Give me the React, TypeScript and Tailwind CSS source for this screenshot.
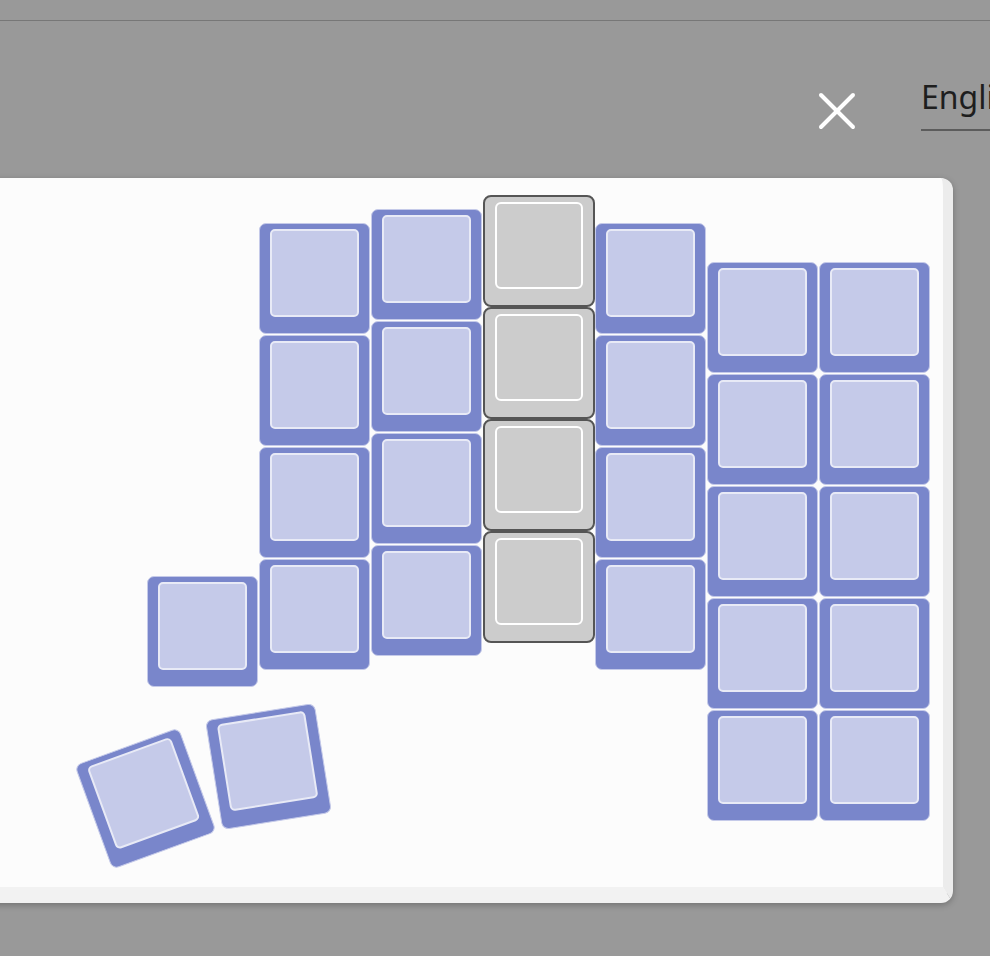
import React from 'react';

type Key = { x: number; y: number; r?: number; gray?: boolean };

// key positions in page pixels (top-left of the 111px keycap)
const PANEL_LEFT = -20;
const PANEL_TOP = 178;
const PITCH = 112;

function column(x: number, y: number, rows: number, gray = false): Key[] {
  return Array.from({ length: rows }, (_, i) => ({ x, y: y + i * PITCH, gray }));
}

const keys: Key[] = [
  ...column(259, 223, 4),
  ...column(371, 209, 4),
  ...column(483, 195, 4, true),
  ...column(595, 223, 4),
  ...column(707, 262, 5),
  ...column(819, 262, 5),
  { x: 147, y: 576 },
  { x: 90, y: 743, r: -20 },
  { x: 213, y: 711, r: -9 },
];

function KeyCap({ k }: { k: Key }) {
  const style = {
    left: k.x - PANEL_LEFT,
    top: k.y - PANEL_TOP,
    transform: k.r ? `rotate(${k.r}deg)` : undefined,
  };
  if (k.gray) {
    return (
      <div
        className="absolute w-[112px] h-[112px] rounded-[8px] border-2 border-[#555555] bg-[#cccccc] pt-[5px] px-[10px] pb-[16px]"
        style={style}
      >
        <div className="w-full h-full rounded-[6px] border-2 border-white bg-[#cccccc]" />
      </div>
    );
  }
  return (
    <div
      className="absolute w-[111px] h-[111px] rounded-[7px] border border-[#c5cae9] bg-[#7986cb] pt-[5px] px-[10px] pb-[16px]"
      style={style}
    >
      <div className="w-full h-full rounded-[5px] border-2 border-[#e8eaf6] bg-[#c5cae9]" />
    </div>
  );
}

export default function App() {
  return (
    <main className="w-[990px] h-[956px] overflow-hidden bg-[#999999] font-['Noto_Sans',sans-serif]">
      {/* top bar edge */}
      <div className="h-[21px] border-b-[1.5px] border-[#777777]" />

      {/* header: close + language */}
      <div className="flex items-start h-[157px]">
        <button className="ml-[818px] mt-[71px] w-[38px] h-[38px] text-white">
          <svg viewBox="0 0 38 38" width="38" height="38" fill="none" stroke="currentColor" strokeWidth="4" strokeLinecap="round">
            <line x1="3" y1="3" x2="35" y2="35" />
            <line x1="35" y1="3" x2="3" y2="35" />
          </svg>
        </button>
        <div className="ml-[65px] mt-[54px] w-[200px] shrink-0 border-b-2 border-[#5c5c5c] pb-[10px]">
          <span className="block text-[32px] leading-[44px] text-[#1e1e1e] whitespace-nowrap">English</span>
        </div>
      </div>

      {/* keyboard layout panel */}
      <div className="relative -ml-[20px] w-[973px] h-[725px] rounded-[12px] bg-[#fcfcfc] border-r-[10px] border-b-[16px] border-r-[#ececec] border-b-[#f2f2f2] shadow-[0_2px_6px_rgba(0,0,0,0.25)]">
        {keys.map((k, i) => (
          <KeyCap key={i} k={k} />
        ))}
      </div>
    </main>
  );
}
